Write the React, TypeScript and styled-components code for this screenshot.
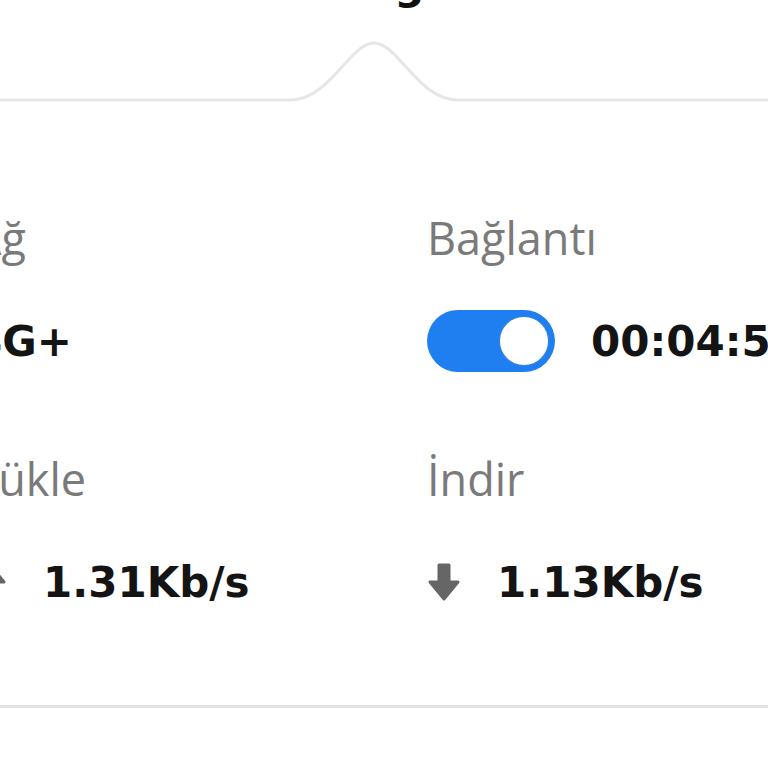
import { FC } from "react";
import styled, { createGlobalStyle } from "styled-components";

const GlobalStyle = createGlobalStyle`
  html, body {
    margin: 0;
    padding: 0;
    background: #ffffff;
    overflow: hidden;
  }
`;

type Direction = "up" | "down";

const ArrowIcon: FC<{ direction: Direction }> = ({ direction }) => (
  <IconBox direction={direction}>
    <svg width="34" height="40" viewBox="0 0 34 40">
      <path
        d="M12 3 H22 V20 H31 L17 37 L3 20 H12 Z"
        fill="#666666"
        stroke="#666666"
        strokeWidth="3"
        strokeLinejoin="round"
      />
    </svg>
  </IconBox>
);

const Toggle: FC<{ on: boolean }> = ({ on }) => (
  <Track on={on}>
    <Knob />
  </Track>
);

const App: FC = () => {
  return (
    <Page>
      <GlobalStyle />
      <Title>Bağlantı</Title>
      <Edge>
        {/* popover top border with its pointer */}
        <svg width="768" height="92" viewBox="0 0 768 92">
          <path
            d="M0 89 H290 C330 89 350 32 374 32 C398 32 418 89 458 89 H768"
            fill="none"
            stroke="#e6e6e6"
            strokeWidth="3"
          />
        </svg>
      </Edge>
      <Grid>
        <Cell>
          <Label>Ağ</Label>
          <ValueRow>
            <Value>4G+</Value>
          </ValueRow>
        </Cell>
        <Cell>
          <Label>Bağlantı</Label>
          <ValueRow>
            <Toggle on />
            <Value>00:04:52</Value>
          </ValueRow>
        </Cell>
        <Cell>
          <Label>Yükle</Label>
          <ValueRow>
            <ArrowIcon direction="up" />
            <Value>1.31Kb/s</Value>
          </ValueRow>
        </Cell>
        <Cell>
          <Label>İndir</Label>
          <ValueRow>
            <ArrowIcon direction="down" />
            <Value>1.13Kb/s</Value>
          </ValueRow>
        </Cell>
      </Grid>
      <Footer />
    </Page>
  );
};

export default App;

const Page = styled.div({
  width: "768px",
  height: "768px",
  overflow: "hidden",
  background: "#ffffff",
  display: "flex",
  flexDirection: "column",
});

const Title = styled.div({
  marginTop: "-40px",
  height: "49px",
  paddingLeft: "334px",
  fontFamily: '"DejaVu Sans", sans-serif',
  fontWeight: 700,
  fontSize: "42px",
  color: "#111111",
  whiteSpace: "nowrap",
});

const Edge = styled.div({
  marginTop: "2px",
  height: "92px",
  lineHeight: 0,
});

const Grid = styled.div({
  marginTop: "108px",
  marginLeft: "-27px",
  display: "grid",
  gridTemplateColumns: "454px 454px",
  rowGap: "80px",
});

const Cell = styled.div({
  display: "flex",
  flexDirection: "column",
});

const Label = styled.div({
  height: "53px",
  lineHeight: "53px",
  fontFamily: '"Open Sans", sans-serif',
  fontSize: "45px",
  color: "#7a7a7a",
  whiteSpace: "nowrap",
});

const ValueRow = styled.div({
  marginTop: "46px",
  height: "62px",
  display: "flex",
  alignItems: "center",
  gap: "36px",
  whiteSpace: "nowrap",
});

const Value = styled.span({
  fontFamily: '"DejaVu Sans", sans-serif',
  fontWeight: 700,
  fontSize: "42px",
  color: "#141414",
});

const IconBox = styled.span<{ direction: Direction }>(({ direction }) => ({
  width: "34px",
  height: "40px",
  display: "flex",
  transform: direction === "up" ? "rotate(180deg)" : "none",
}));

const Track = styled.span<{ on: boolean }>(({ on }) => ({
  width: "128px",
  height: "62px",
  boxSizing: "border-box",
  borderRadius: "31px",
  background: on ? "#1f7ff0" : "#cccccc",
  padding: "7px",
  display: "flex",
  justifyContent: on ? "flex-end" : "flex-start",
  alignItems: "center",
}));

const Knob = styled.span({
  width: "48px",
  height: "48px",
  borderRadius: "50%",
  background: "#ffffff",
  boxShadow: "0 0 0 1px #3a86e0",
});

const Footer = styled.div({
  marginTop: "92px",
  borderTop: "3px solid #e2e2e2",
});
